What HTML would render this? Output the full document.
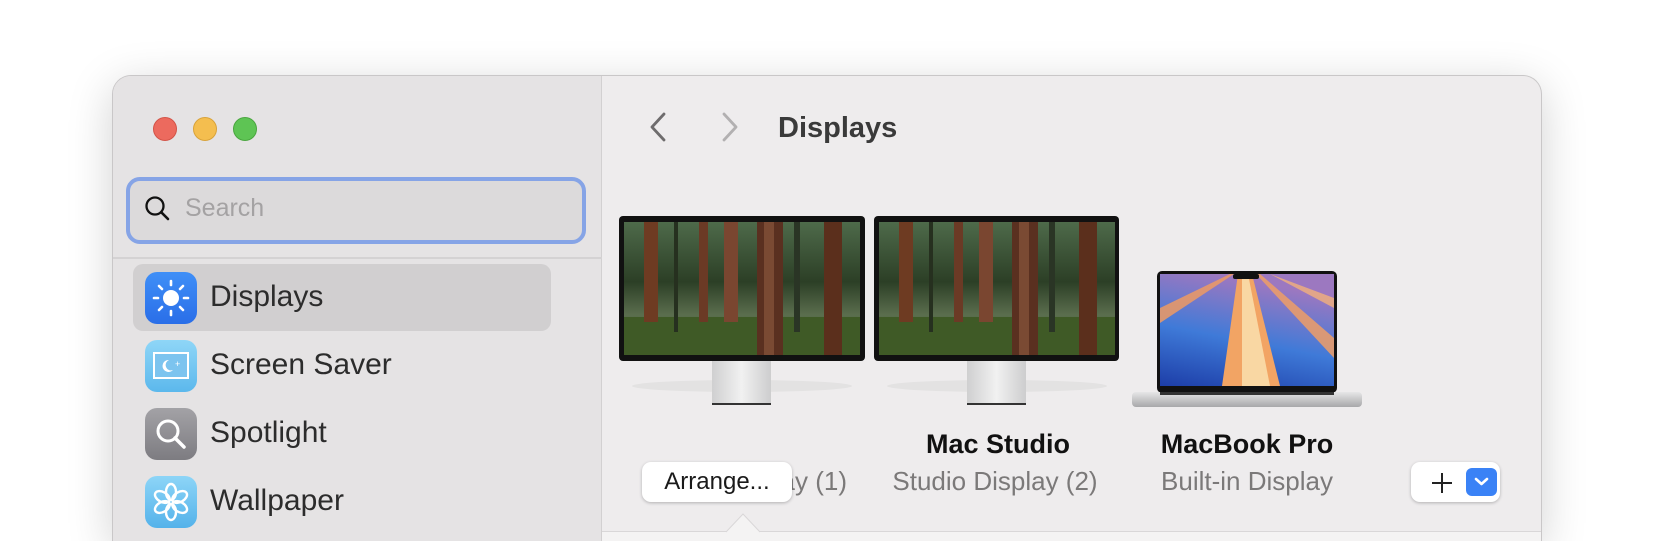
<!DOCTYPE html>
<html><head><meta charset="utf-8"><style>
*{margin:0;padding:0;box-sizing:border-box}
html,body{width:1654px;height:541px;overflow:hidden}
body{background:#fff;position:relative;font-family:"Liberation Sans",sans-serif}
.win{position:absolute;left:112px;top:75px;width:1430px;height:466px;border-radius:19px 19px 0 0;background:#eeeced;border:1px solid #c9c7c8;border-bottom:none;box-shadow:0 10px 45px rgba(0,0,0,.18);overflow:hidden}
.side{position:absolute;left:0;top:0;width:489px;height:100%;background:#e5e3e4;border-right:1px solid #d2d0d1}
.dot{position:absolute;top:41px;width:24px;height:24px;border-radius:50%}
.search{position:absolute;left:13px;top:101px;width:460px;height:67px;border-radius:14px;border:4px solid #86a4e6;background:#dcdadb}
.search span{position:absolute;left:55px;top:13px;font-size:25px;color:#a4a2a3}
.sep{position:absolute;left:0;top:181px;width:489px;height:2px;background:#d4d2d3}
.row{position:absolute;left:20px;width:418px;height:67px;border-radius:10px}
.row .ic{position:absolute;left:12px;top:8px;width:52px;height:52px;border-radius:12px}
.row .t{position:absolute;left:77px;top:16px;font-size:30px;color:#2c2c2c}
.lbl{position:absolute;text-align:center;font-size:26px;color:#7b7979;white-space:nowrap}
.bold{font-weight:bold;color:#111;font-size:27px}
</style></head><body>
<div class="win">
 <div class="side">
  <div class="dot" style="left:40px;background:#ec6a5e;border:1px solid #d35448"></div>
  <div class="dot" style="left:80px;background:#f4be4f;border:1px solid #d9a33a"></div>
  <div class="dot" style="left:120px;background:#5ec454;border:1px solid #4aa63f"></div>
  <div class="search">
   <svg style="position:absolute;left:14px;top:14px" width="28" height="28" viewBox="0 0 28 28"><circle cx="11" cy="11" r="8.5" fill="none" stroke="#111" stroke-width="2.3"/><line x1="17.3" y1="17.3" x2="24" y2="24" stroke="#111" stroke-width="2.6" stroke-linecap="round"/></svg>
   <span>Search</span>
  </div>
  <div class="sep"></div>
  <div class="row" style="top:188px;background:#d1cfd0">
   <div class="ic" style="background:linear-gradient(#3f8ff7,#2a6ee8)"><svg width="52" height="52" viewBox="0 0 52 52"><circle cx="26" cy="26" r="8" fill="#fff"/><g stroke="#fff" stroke-width="2.6" stroke-linecap="round"><line x1="26" y1="9" x2="26" y2="13"/><line x1="26" y1="39" x2="26" y2="43"/><line x1="9" y1="26" x2="13" y2="26"/><line x1="39" y1="26" x2="43" y2="26"/><line x1="14" y1="14" x2="17" y2="17"/><line x1="35" y1="35" x2="38" y2="38"/><line x1="38" y1="14" x2="35" y2="17"/><line x1="14" y1="38" x2="17" y2="35"/></g></svg></div>
   <div class="t">Displays</div>
  </div>
  <div class="row" style="top:256px">
   <div class="ic" style="background:linear-gradient(#8fd6f7,#5cb8ec)"><svg width="52" height="52" viewBox="0 0 52 52"><rect x="9" y="13" width="34" height="25" fill="#7cc4ef" stroke="#fff" stroke-width="2"/><path d="M24 20a6 6 0 1 0 4 10a5 5 0 0 1-4-10z" fill="#fff"/><text x="30" y="27" font-size="9" fill="#fff">+</text></svg></div>
   <div class="t">Screen Saver</div>
  </div>
  <div class="row" style="top:324px">
   <div class="ic" style="background:linear-gradient(#a3a2a6,#7d7c81)"><svg width="52" height="52" viewBox="0 0 52 52"><circle cx="23" cy="23" r="10" fill="none" stroke="#fff" stroke-width="3"/><line x1="30" y1="30" x2="39" y2="39" stroke="#fff" stroke-width="3.5" stroke-linecap="round"/></svg></div>
   <div class="t">Spotlight</div>
  </div>
  <div class="row" style="top:392px">
   <div class="ic" style="background:linear-gradient(#8dd5f7,#54b2ea)"><svg width="52" height="52" viewBox="0 0 52 52"><g fill="none" stroke="#fff" stroke-width="2.4" transform="translate(26 26)"><ellipse cx="0" cy="-10" rx="5" ry="8"/><ellipse cx="0" cy="-10" rx="5" ry="8" transform="rotate(60)"/><ellipse cx="0" cy="-10" rx="5" ry="8" transform="rotate(120)"/><ellipse cx="0" cy="-10" rx="5" ry="8" transform="rotate(180)"/><ellipse cx="0" cy="-10" rx="5" ry="8" transform="rotate(240)"/><ellipse cx="0" cy="-10" rx="5" ry="8" transform="rotate(300)"/></g></svg></div>
   <div class="t">Wallpaper</div>
  </div>
 </div>
</div>
<svg style="position:absolute;left:645px;top:110px" width="100" height="36" viewBox="0 0 100 36"><path d="M19 4L7 17L19 30" fill="none" stroke="#6e6c6d" stroke-width="2.8" stroke-linecap="round" stroke-linejoin="round"/><path d="M79 4L91 17L79 30" fill="none" stroke="#b2b0b1" stroke-width="2.8" stroke-linecap="round" stroke-linejoin="round"/></svg>
<div style="position:absolute;left:778px;top:112px;font-size:29px;font-weight:bold;color:#3a3a3a">Displays</div>

<svg style="position:absolute;left:619px;top:216px" width="500" height="195" viewBox="0 0 500 195">
 <defs>
  <linearGradient id="fg" x1="0" y1="0" x2="0" y2="1"><stop offset="0" stop-color="#4e6a4a"/><stop offset=".45" stop-color="#2c3f26"/><stop offset=".7" stop-color="#5b6e4e"/><stop offset="1" stop-color="#2e4a1e"/></linearGradient>
  <linearGradient id="st" x1="0" y1="0" x2="1" y2="0"><stop offset="0" stop-color="#cfcfd0"/><stop offset=".5" stop-color="#f1f1f1"/><stop offset="1" stop-color="#cdcdce"/></linearGradient>
  <g id="forest">
   <rect x="0" y="0" width="236" height="133" fill="url(#fg)"/>
   <rect x="0" y="95" width="236" height="38" fill="#3f5a26"/>
   <rect x="20" y="0" width="14" height="100" fill="#6e3b22"/>
   <rect x="50" y="0" width="4" height="110" fill="#26301f"/>
   <rect x="75" y="0" width="9" height="100" fill="#6b3a25"/>
   <rect x="100" y="0" width="14" height="100" fill="#7a4630"/>
   <rect x="133" y="0" width="26" height="133" fill="#5a3020"/>
   <rect x="140" y="0" width="10" height="133" fill="#7a4a33"/>
   <rect x="200" y="0" width="18" height="133" fill="#5b2f1c"/>
   <rect x="170" y="0" width="6" height="110" fill="#2a3525"/>
  </g>
 </defs>
 <ellipse cx="123" cy="170" rx="110" ry="6" fill="#e3e2e2"/>
 <rect x="93" y="145" width="59" height="44" fill="url(#st)"/><rect x="93" y="187" width="59" height="2" fill="#333"/>
 <rect x="0" y="0" width="246" height="145" rx="4" fill="#111"/>
 <g transform="translate(5 6)"><use href="#forest"/></g>
 <ellipse cx="378" cy="170" rx="110" ry="6" fill="#e3e2e2"/>
 <rect x="348" y="145" width="59" height="44" fill="url(#st)"/><rect x="348" y="187" width="59" height="2" fill="#333"/>
 <rect x="255" y="0" width="245" height="145" rx="4" fill="#111"/>
 <g transform="translate(260 6)"><use href="#forest"/></g>
</svg>

<svg style="position:absolute;left:1130px;top:268px" width="236" height="145" viewBox="0 0 236 145">
 <defs>
  <linearGradient id="sky" x1="0" y1="1" x2=".3" y2="0"><stop offset="0" stop-color="#1d3ea8"/><stop offset=".5" stop-color="#3f7ad8"/><stop offset="1" stop-color="#9c78c0"/></linearGradient>
  <linearGradient id="bs" x1="0" y1="0" x2="0" y2="1"><stop offset="0" stop-color="#e6e6e7"/><stop offset="1" stop-color="#a8a8aa"/></linearGradient>
 </defs>
 <rect x="27" y="3" width="180" height="122" rx="5" fill="#111"/>
 <rect x="30" y="6" width="174" height="112" fill="url(#sky)"/>
 <path d="M108 6L92 118H150L122 6z" fill="#f2a464"/>
 <path d="M112 6L112 118H140L118 6z" fill="#f9d7a3"/>
 <path d="M100 6L30 40V55L104 6z" fill="#ee9a63" opacity=".85"/>
 <path d="M130 6L204 70V90L126 6z" fill="#ef9d66" opacity=".85"/>
 <path d="M140 6L204 30V40z" fill="#f3b07a" opacity=".8"/>
 <rect x="103" y="6" width="26" height="5" rx="2" fill="#111"/>
 <rect x="2" y="124" width="230" height="15" rx="4" fill="url(#bs)"/>
 <rect x="30" y="124" width="174" height="3" fill="#333"/>
</svg>

<div class="lbl bold" style="left:888px;width:220px;top:429px">Mac Studio</div>
<div class="lbl" style="left:870px;width:250px;top:466px">Studio Display (2)</div>
<div class="lbl bold" style="left:1137px;width:220px;top:429px">MacBook Pro</div>
<div class="lbl" style="left:1120px;width:254px;top:466px">Built-in Display</div>
<div class="lbl" style="right:807px;top:466px">Display (1)</div>
<div style="position:absolute;left:642px;top:462px;width:150px;height:40px;background:#fff;border-radius:9px;box-shadow:0 1px 3px rgba(0,0,0,.25);font-size:24px;color:#1a1a1a;text-align:center;line-height:40px">Arrange...</div>
<div style="position:absolute;left:1411px;top:462px;width:89px;height:40px;background:#fff;border-radius:9px;box-shadow:0 1px 3px rgba(0,0,0,.25)">
 <svg style="position:absolute;left:20px;top:10px" width="22" height="22"><path d="M11 1V21M1 11H21" stroke="#222" stroke-width="2"/></svg>
 <div style="position:absolute;left:55px;top:6px;width:31px;height:28px;border-radius:6px;background:#3a82f6"><svg width="31" height="28"><path d="M10 11l5.5 5 5.5-5" fill="none" stroke="#fff" stroke-width="2.6" stroke-linecap="round" stroke-linejoin="round"/></svg></div>
</div>
<div style="position:absolute;left:602px;top:531px;width:939px;height:10px;background:#f4f3f3;border-top:1px solid #d9d7d8"></div>
<svg style="position:absolute;left:726px;top:511px" width="34" height="22"><path d="M0 21L17 3L34 21" fill="#f4f3f3" stroke="#d9d7d8" stroke-width="1"/></svg>
</body></html>
